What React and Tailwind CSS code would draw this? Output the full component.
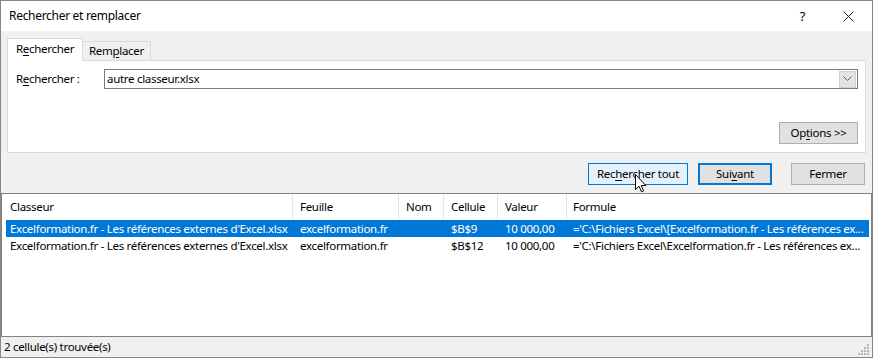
import React from "react";

const F = { fontFamily: '"Noto Sans", "Open Sans", sans-serif' };

function Cols({ cells, header, selected }) {
  const widths = ["w-[287px] pl-[4px]", "w-[106px] pl-[7px]", "w-[45px] pl-[7px]", "w-[54px] pl-[7px]", "w-[69px] pl-[7px]", "flex-1 pl-[6px]"];
  return (
    <div
      className={
        "flex ml-[4px] mr-[2px] " +
        (header ? "h-[26px] items-center" : "h-[17px] items-center") +
        (selected ? " bg-[#0078d7] text-white" : " text-black")
      }
    >
      {cells.map((c, i) => (
        <div
          key={i}
          className={
            widths[i] +
            " whitespace-nowrap overflow-hidden h-full flex items-center" +
            (header && i < 5 ? " border-r border-[#e5e5e5]" : "")
          }
        >
          {c}
        </div>
      ))}
    </div>
  );
}

export default function App() {
  const wb = "Excelformation.fr - Les références externes d'Excel.xlsx";
  return (
    <div
      style={F}
      className="w-[873px] h-[358px] border border-[#868686] flex flex-col bg-[#f0f0f0] text-[11.5px] tracking-[-0.3px] text-black leading-none overflow-hidden"
    >
      {/* Title bar */}
      <div className="h-[30px] bg-white flex items-center pl-[8px] pr-[18px] shrink-0">
        <div className="flex-1 text-[12px]">Rechercher et remplacer</div>
        <div className="text-[13px] mr-[38px]">?</div>
        <svg width="11" height="11" viewBox="0 0 11 11" className="block">
          <path d="M0.5 0.5 L10.5 10.5 M10.5 0.5 L0.5 10.5" stroke="#222" strokeWidth="1" />
        </svg>
      </div>

      {/* Tabs */}
      <div className="flex items-end h-[22px] mt-[7px] px-[6px] shrink-0 relative z-10">
        <div className="w-[76px] h-[23px] -mb-px bg-white border border-[#d9d9d9] border-b-0 flex items-center pl-[8px] pb-[2px]">
          R<span className="underline underline-offset-2">e</span>chercher
        </div>
        <div className="w-[68px] h-[19px] bg-[#f0f0f0] border border-[#d9d9d9] border-l-0 border-b-0 flex items-center pl-[6px]">
          Rem<span className="underline underline-offset-2">p</span>lacer
        </div>
      </div>

      {/* Panel */}
      <div className="mx-[6px] h-[93px] bg-white border border-[#d9d9d9] shrink-0 flex flex-col pl-[8px] pr-[7px] pt-[8px]">
        <div className="flex items-center h-[20px]">
          <div className="w-[88px]">
            R<span className="underline underline-offset-2">e</span>chercher :
          </div>
          <div className="flex-1 h-[20px] border border-[#7a7a7a] flex items-center pl-[1px] pr-[1px]">
            <div className="flex-1 pl-[1px]">autre classeur.xlsx</div>
            <div className="w-[17px] h-[17px] bg-[#e3e3e3] border border-[#cfcfcf] flex items-center justify-center">
              <svg width="9" height="6" viewBox="0 0 9 6">
                <path d="M0.5 0.5 L4.5 4.5 L8.5 0.5" stroke="#606060" fill="none" strokeWidth="1" />
              </svg>
            </div>
          </div>
        </div>
        <div className="flex-1" />
        <div className="flex justify-end mb-[8px]">
          <div className="w-[79px] h-[22px] bg-[#e1e1e1] border border-[#adadad] flex items-center justify-center">
            Op<span className="underline underline-offset-2">t</span>ions &gt;&gt;
          </div>
        </div>
      </div>

      {/* Buttons */}
      <div className="flex justify-end pr-[7px] mt-[10px] h-[22px] shrink-0">
        <div className="relative w-[100px] h-[22px] bg-[#e5f1fb] border border-[#0078d7] flex items-center justify-center">
          Rec<span className="underline underline-offset-2">h</span>ercher tout
          <svg
            className="absolute left-[46px] top-[10px]"
            width="13"
            height="20"
            viewBox="0 0 13 20"
          >
            <path
              d="M0.5 0.5 L0.5 15.5 L4 12.2 L6.5 17.8 L8.6 16.9 L6.2 11.5 L10.8 11.5 Z"
              fill="white"
              stroke="black"
              strokeWidth="1"
              strokeLinejoin="miter"
            />
          </svg>
        </div>
        <div className="w-[74px] h-[22px] ml-[10px] bg-[#e1e1e1] border-2 border-[#0078d7] flex items-center justify-center">
          Sui<span className="underline underline-offset-2">v</span>ant
        </div>
        <div className="w-[74px] h-[22px] ml-[19px] bg-[#e1e1e1] border border-[#adadad] flex items-center justify-center">
          Fermer
        </div>
      </div>

      {/* Results list */}
      <div className="mt-[8px] flex-1 bg-white border border-[#828282] min-h-0 overflow-hidden">
        <Cols header cells={["Classeur", "Feuille", "Nom", "Cellule", "Valeur", "Formule"]} />
        <Cols
          selected
          cells={[wb, "excelformation.fr", "", "$B$9", "10 000,00", "='C:\\Fichiers Excel\\[Excelformation.fr - Les références ex..."]}
        />
        <Cols
          cells={[wb, "excelformation.fr", "", "$B$12", "10 000,00", "='C:\\Fichiers Excel\\Excelformation.fr - Les références ex..."]}
        />
      </div>

      {/* Status bar */}
      <div className="h-[20px] shrink-0 flex items-center pl-[3px] relative">
        <div className="flex-1">2 cellule(s) trouvée(s)</div>
        <svg width="12" height="12" viewBox="0 0 12 12" className="absolute right-[2px] bottom-[2px]">
          <rect x="9" y="1" width="2" height="2" fill="#b5b5b5" />
          <rect x="6" y="4" width="2" height="2" fill="#b5b5b5" />
          <rect x="9" y="4" width="2" height="2" fill="#b5b5b5" />
          <rect x="3" y="7" width="2" height="2" fill="#b5b5b5" />
          <rect x="6" y="7" width="2" height="2" fill="#b5b5b5" />
          <rect x="9" y="7" width="2" height="2" fill="#b5b5b5" />
          <rect x="0" y="10" width="2" height="2" fill="#b5b5b5" />
          <rect x="3" y="10" width="2" height="2" fill="#b5b5b5" />
          <rect x="6" y="10" width="2" height="2" fill="#b5b5b5" />
          <rect x="9" y="10" width="2" height="2" fill="#b5b5b5" />
        </svg>
      </div>
    </div>
  );
}
